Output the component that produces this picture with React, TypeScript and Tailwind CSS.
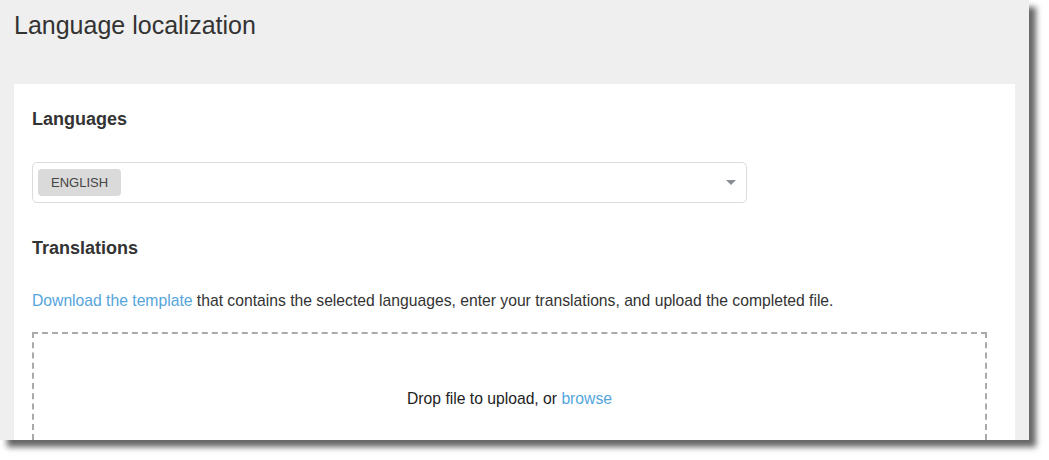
import React from 'react';

const font = { fontFamily: '"Liberation Sans", Arial, sans-serif' };

export default function App() {
  return (
    <div className="w-[1049px] h-[460px] bg-white" style={font}>
      <div className="w-[1029px] h-[440px] bg-[#efefef] overflow-hidden shadow-[7px_7px_6px_rgba(0,0,0,0.6)]">
        {/* Page title */}
        <h1 className="pt-[10px] pl-[14px] text-[25px] leading-[30px] text-[#333]">
          Language localization
        </h1>

        {/* Card */}
        <div className="mt-[44px] mx-[14px] bg-white pt-[23px] pl-[18px] h-[400px]">
          <h2 className="text-[18px] leading-[24px] font-bold text-[#333]">Languages</h2>

          <div className="mt-[31px] w-[715px] h-[41px] border border-[#dcdcdc] rounded-[5px] flex items-center justify-between pl-[5px] pr-[10px]">
            <span className="h-[27px] px-[13px] flex items-center bg-[#dadada] rounded-[4px] text-[13px] text-[#444]">
              ENGLISH
            </span>
            <svg width="10" height="5" viewBox="0 0 10 5">
              <path d="M0 0 L10 0 L5 5 Z" fill="#8a8e97" />
            </svg>
          </div>

          <h2 className="mt-[33px] text-[18px] leading-[24px] font-bold text-[#333]">Translations</h2>

          <p className="mt-[31px] text-[15.7px] leading-[20px] text-[#333]">
            <a className="text-[#55a5dc]">Download the template</a> that contains the selected languages,
            enter your translations, and upload the completed file.
          </p>

          <div className="mt-[21px] w-[955px] h-[200px] border-2 border-dashed border-[#aaa] pt-[55px] text-center">
            <p className="text-[15.7px] leading-[20px] text-[#222]">
              Drop file to upload, or <a className="text-[#55a5dc]">browse</a>
            </p>
          </div>
        </div>
      </div>
    </div>
  );
}
